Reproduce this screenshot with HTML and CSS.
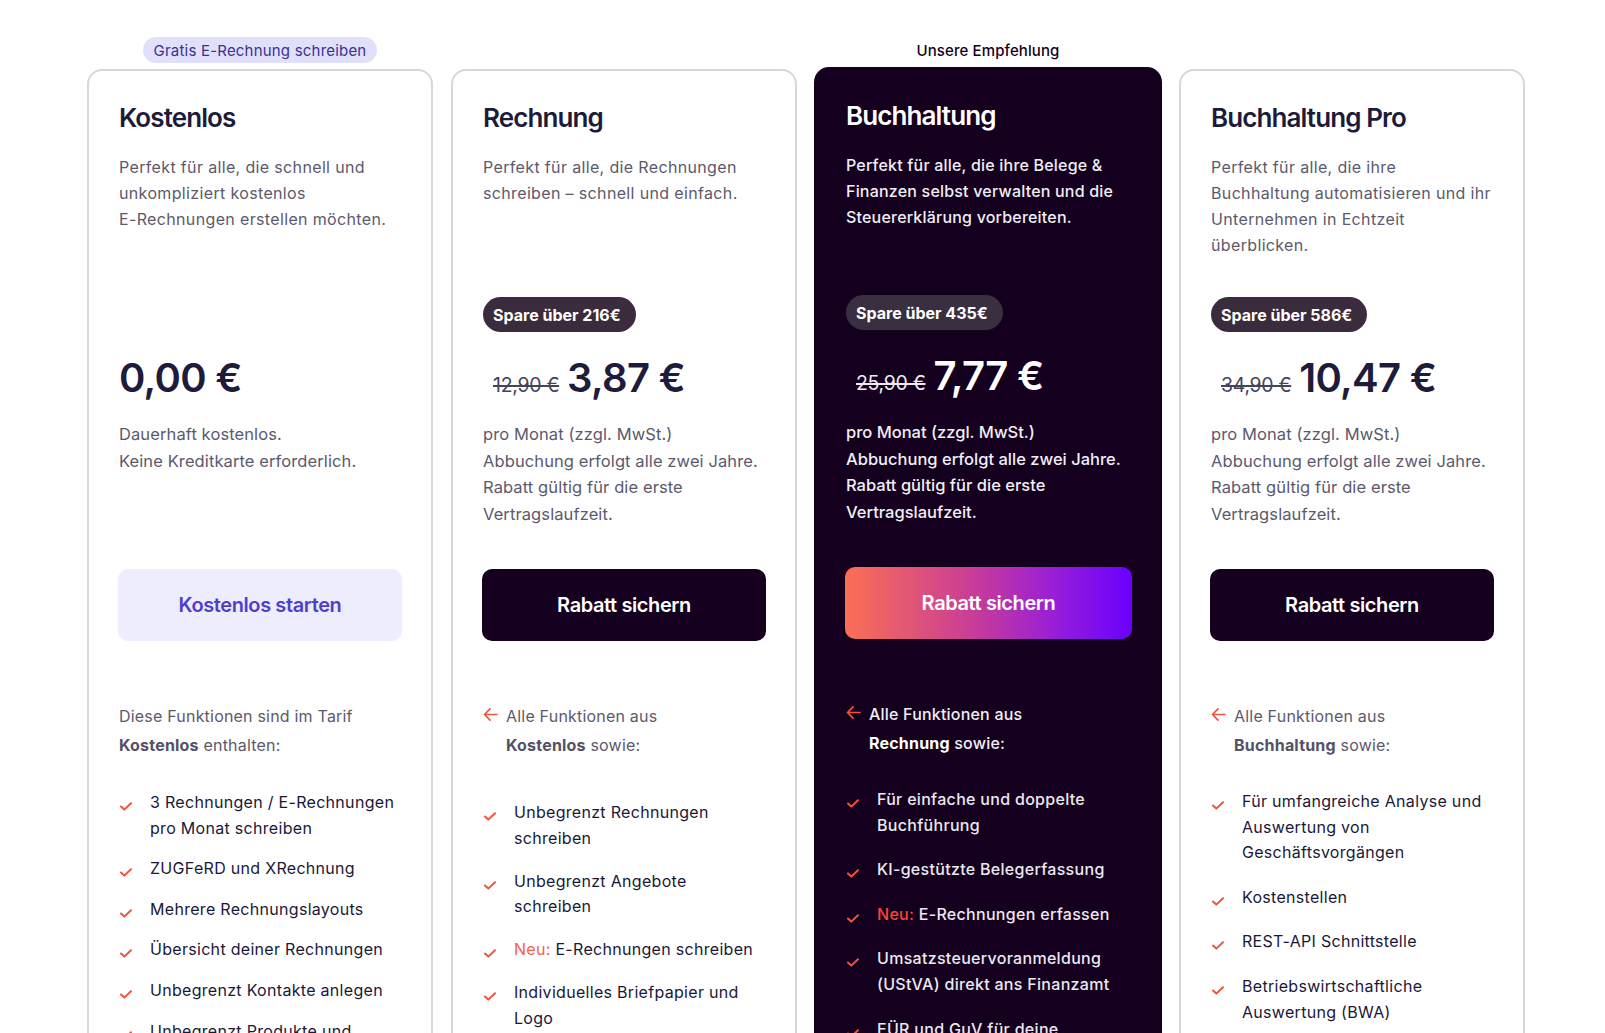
FILE: index.html
```html
<!DOCTYPE html>
<html lang="de">
<head>
<meta charset="utf-8">
<title>Tarife</title>
<link rel="stylesheet" href="styles.css">
</head>
<body>
<main class="plans">

  <section class="col">
    <div class="label-row"><span class="pill">Gratis E-Rechnung schreiben</span></div>
    <div class="card">
      <h2 class="title">Kostenlos</h2>
      <p class="desc">Perfekt für alle, die schnell und<br>unkompliziert kostenlos<br>E-Rechnungen erstellen möchten.</p>
      <div class="badge-slot"></div>
      <div class="price"><span class="now">0,00 €</span></div>
      <p class="note">Dauerhaft kostenlos.<br>Keine Kreditkarte erforderlich.</p>
      <a class="btn btn-light" href="#">Kostenlos starten</a>
      <div class="feat-head"><span class="feat-head-text">Diese Funktionen sind im Tarif<br><b>Kostenlos</b> enthalten:</span></div>
      <ul class="features gap-sm list-first">
        <li><svg class="check" viewBox="0 0 12 9"><path d="M1 4.5 L4.3 7.6 L11 1.2"/></svg><span>3 Rechnungen / E-Rechnungen pro Monat schreiben</span></li>
        <li><svg class="check" viewBox="0 0 12 9"><path d="M1 4.5 L4.3 7.6 L11 1.2"/></svg><span>ZUGFeRD und XRechnung</span></li>
        <li><svg class="check" viewBox="0 0 12 9"><path d="M1 4.5 L4.3 7.6 L11 1.2"/></svg><span>Mehrere Rechnungslayouts</span></li>
        <li><svg class="check" viewBox="0 0 12 9"><path d="M1 4.5 L4.3 7.6 L11 1.2"/></svg><span>Übersicht deiner Rechnungen</span></li>
        <li><svg class="check" viewBox="0 0 12 9"><path d="M1 4.5 L4.3 7.6 L11 1.2"/></svg><span>Unbegrenzt Kontakte anlegen</span></li>
        <li><svg class="check" viewBox="0 0 12 9"><path d="M1 4.5 L4.3 7.6 L11 1.2"/></svg><span>Unbegrenzt Produkte und Dienstleistungen anlegen</span></li>
      </ul>
    </div>
  </section>

  <section class="col">
    <div class="label-row"></div>
    <div class="card">
      <h2 class="title">Rechnung</h2>
      <p class="desc">Perfekt für alle, die Rechnungen<br>schreiben – schnell und einfach.</p>
      <div class="badge-slot"><span class="badge">Spare über 216€</span></div>
      <div class="price"><s class="old">12,90 €</s><span class="now">3,87 €</span></div>
      <p class="note">pro Monat (zzgl. MwSt.)<br>Abbuchung erfolgt alle zwei Jahre.<br>Rabatt gültig für die erste<br>Vertragslaufzeit.</p>
      <a class="btn btn-dark" href="#">Rabatt sichern</a>
      <div class="feat-head"><svg class="arrow" viewBox="0 0 16 14"><path d="M15 7 H1.5 M7.5 1 L1.5 7 L7.5 13"/></svg><span class="feat-head-text">Alle Funktionen aus<br><b>Kostenlos</b> sowie:</span></div>
      <ul class="features gap-md list-low">
        <li><svg class="check" viewBox="0 0 12 9"><path d="M1 4.5 L4.3 7.6 L11 1.2"/></svg><span>Unbegrenzt Rechnungen schreiben</span></li>
        <li><svg class="check" viewBox="0 0 12 9"><path d="M1 4.5 L4.3 7.6 L11 1.2"/></svg><span>Unbegrenzt Angebote schreiben</span></li>
        <li><svg class="check" viewBox="0 0 12 9"><path d="M1 4.5 L4.3 7.6 L11 1.2"/></svg><span><em class="new">Neu:</em> E-Rechnungen schreiben</span></li>
        <li><svg class="check" viewBox="0 0 12 9"><path d="M1 4.5 L4.3 7.6 L11 1.2"/></svg><span>Individuelles Briefpapier und Logo</span></li>
        <li><svg class="check" viewBox="0 0 12 9"><path d="M1 4.5 L4.3 7.6 L11 1.2"/></svg><span>Mahnungen und Zahlungserinnerungen</span></li>
      </ul>
    </div>
  </section>

  <section class="col">
    <div class="label-row"><span class="recommend">Unsere Empfehlung</span></div>
    <div class="card card-featured">
      <h2 class="title">Buchhaltung</h2>
      <p class="desc">Perfekt für alle, die ihre Belege &amp;<br>Finanzen selbst verwalten und die<br>Steuererklärung vorbereiten.</p>
      <div class="badge-slot"><span class="badge">Spare über 435€</span></div>
      <div class="price"><s class="old">25,90 €</s><span class="now">7,77 €</span></div>
      <p class="note">pro Monat (zzgl. MwSt.)<br>Abbuchung erfolgt alle zwei Jahre.<br>Rabatt gültig für die erste<br>Vertragslaufzeit.</p>
      <a class="btn btn-gradient" href="#">Rabatt sichern</a>
      <div class="feat-head"><svg class="arrow" viewBox="0 0 16 14"><path d="M15 7 H1.5 M7.5 1 L1.5 7 L7.5 13"/></svg><span class="feat-head-text">Alle Funktionen aus<br><b>Rechnung</b> sowie:</span></div>
      <ul class="features gap-lg">
        <li><svg class="check" viewBox="0 0 12 9"><path d="M1 4.5 L4.3 7.6 L11 1.2"/></svg><span>Für einfache und doppelte Buchführung</span></li>
        <li><svg class="check" viewBox="0 0 12 9"><path d="M1 4.5 L4.3 7.6 L11 1.2"/></svg><span>KI-gestützte Belegerfassung</span></li>
        <li><svg class="check" viewBox="0 0 12 9"><path d="M1 4.5 L4.3 7.6 L11 1.2"/></svg><span><em class="new">Neu:</em> E-Rechnungen erfassen</span></li>
        <li><svg class="check" viewBox="0 0 12 9"><path d="M1 4.5 L4.3 7.6 L11 1.2"/></svg><span>Umsatzsteuervoranmeldung (UStVA) direkt ans Finanzamt</span></li>
        <li><svg class="check" viewBox="0 0 12 9"><path d="M1 4.5 L4.3 7.6 L11 1.2"/></svg><span>EÜR und GuV für deine Steuererklärung</span></li>
      </ul>
    </div>
  </section>

  <section class="col">
    <div class="label-row"></div>
    <div class="card">
      <h2 class="title">Buchhaltung Pro</h2>
      <p class="desc">Perfekt für alle, die ihre<br>Buchhaltung automatisieren und ihr<br>Unternehmen in Echtzeit<br>überblicken.</p>
      <div class="badge-slot"><span class="badge">Spare über 586€</span></div>
      <div class="price"><s class="old">34,90 €</s><span class="now">10,47 €</span></div>
      <p class="note">pro Monat (zzgl. MwSt.)<br>Abbuchung erfolgt alle zwei Jahre.<br>Rabatt gültig für die erste<br>Vertragslaufzeit.</p>
      <a class="btn btn-dark" href="#">Rabatt sichern</a>
      <div class="feat-head"><svg class="arrow" viewBox="0 0 16 14"><path d="M15 7 H1.5 M7.5 1 L1.5 7 L7.5 13"/></svg><span class="feat-head-text">Alle Funktionen aus<br><b>Buchhaltung</b> sowie:</span></div>
      <ul class="features gap-lg">
        <li><svg class="check" viewBox="0 0 12 9"><path d="M1 4.5 L4.3 7.6 L11 1.2"/></svg><span>Für umfangreiche Analyse und Auswertung von Geschäftsvorgängen</span></li>
        <li><svg class="check" viewBox="0 0 12 9"><path d="M1 4.5 L4.3 7.6 L11 1.2"/></svg><span>Kostenstellen</span></li>
        <li><svg class="check" viewBox="0 0 12 9"><path d="M1 4.5 L4.3 7.6 L11 1.2"/></svg><span>REST-API Schnittstelle</span></li>
        <li><svg class="check" viewBox="0 0 12 9"><path d="M1 4.5 L4.3 7.6 L11 1.2"/></svg><span>Betriebswirtschaftliche Auswertung (BWA)</span></li>
        <li><svg class="check" viewBox="0 0 12 9"><path d="M1 4.5 L4.3 7.6 L11 1.2"/></svg><span>Anlagenverzeichnis</span></li>
      </ul>
    </div>
  </section>

</main>
</body>
</html>
```

FILE: styles.css
```css
* { box-sizing: border-box; }

html, body {
  margin: 0;
  padding: 0;
  background: #ffffff;
}

body {
  font-family: Inter, "Noto Sans", "Liberation Sans", sans-serif;
  color: #1d1b3a;
  -webkit-font-smoothing: antialiased;
}

.plans {
  display: grid;
  grid-template-columns: repeat(4, 346px);
  column-gap: 18px;
  padding: 37px 0 0 87px;
  align-items: start;
}

.col {
  display: flex;
  flex-direction: column;
}

.label-row {
  height: 26px;
  margin-bottom: 6px;
  display: flex;
  justify-content: center;
  align-items: center;
}

.pill {
  display: inline-flex;
  align-items: center;
  height: 26px;
  padding: 0 11px;
  border-radius: 13px;
  background: #e1e0fb;
  color: #3a2f93;
  font-size: 15px;
  letter-spacing: 0.2px;
}

.recommend {
  font-size: 15px;
  font-weight: 500;
  color: #14001e;
  letter-spacing: 0.1px;
}

.card {
  border: 2px solid #d8d8d8;
  border-radius: 15px;
  padding: 30px 30px 40px;
  background: #ffffff;
  display: flex;
  flex-direction: column;
  min-height: 1100px;
}

.card-featured {
  border: none;
  margin: -2px -1px 0 -1px;
  padding: 32px 32px 40px;
  background: #14001e;
  color: #ffffff;
}

.title {
  margin: 0;
  font-size: 26px;
  line-height: 34px;
  font-weight: 600;
  letter-spacing: -0.9px;
  color: #1d1b3a;
}
.card-featured .title { color: #ffffff; }

.desc {
  margin: 19px 0 0;
  min-height: 125px;
  font-size: 16px;
  line-height: 26px;
  color: #5c596d;
  letter-spacing: 0.35px;
}
.card-featured .desc {
  color: #f1eef5;
  font-weight: 500;
  letter-spacing: 0.2px;
}

.badge-slot {
  height: 35px;
  margin-top: 18px;
  display: flex;
  align-items: center;
}

.badge {
  display: inline-flex;
  align-items: center;
  height: 35px;
  padding: 0 15px 0 10px;
  border-radius: 18px;
  background: #3a2c3c;
  color: #ffffff;
  font-size: 16px;
  font-weight: 700;
  letter-spacing: 0;
}
.card-featured .badge { background: #3a2f40; }

.price {
  margin-top: 22px;
  height: 48px;
  line-height: 48px;
  white-space: nowrap;
}

.old {
  margin-left: 10px;
  margin-right: 8px;
  font-size: 19.5px;
  color: #45435a;
  letter-spacing: -0.3px;
  text-decoration-thickness: 1.5px;
}
.card-featured .old { color: #efeaf2; }

.now {
  font-size: 40px;
  font-weight: 600;
  letter-spacing: -0.7px;
  color: #1e1b3b;
}
.card-featured .now { color: #ffffff; }

.note {
  margin: 19px 0 0;
  min-height: 106px;
  font-size: 16.5px;
  line-height: 26.5px;
  color: #5c596d;
  letter-spacing: 0.1px;
}
.card-featured .note {
  color: #f1eef5;
  font-weight: 500;
  letter-spacing: 0;
}

.btn {
  margin: 42px -1px 0;
  height: 72px;
  border-radius: 10px;
  display: flex;
  align-items: center;
  justify-content: center;
  text-decoration: none;
  font-size: 20px;
  font-weight: 600;
  letter-spacing: -0.4px;
}

.btn-light {
  background: #ededfd;
  color: #4f3fcc;
}

.btn-dark {
  background: #15001f;
  color: #ffffff;
}

.btn-gradient {
  margin: 42px -2px 0 -1px;
  background: linear-gradient(90deg, #fb6f55 0%, #c83c98 45%, #9a1fd6 72%, #6a00ff 100%);
  color: #ffffff;
}

.feat-head {
  margin-top: 61px;
  display: flex;
  align-items: flex-start;
  font-size: 16px;
  line-height: 29px;
  color: #5c596d;
  letter-spacing: 0.2px;
}
.feat-head b {
  font-weight: 700;
  color: #545166;
}
.card-featured .feat-head { color: #f1eef5; font-weight: 500; }
.card-featured .feat-head b { color: #ffffff; }

.arrow {
  flex: none;
  width: 15px;
  height: 13px;
  margin: 6px 8px 0 0;
  fill: none;
  stroke: #f2533f;
  stroke-width: 1.8;
  stroke-linecap: round;
  stroke-linejoin: round;
}

.features {
  list-style: none;
  margin: 29px 0 0;
  padding: 0;
  display: flex;
  flex-direction: column;
}
.gap-sm { gap: 15px; }
.gap-md { gap: 17.5px; }
.gap-lg { gap: 19px; }
.list-first { margin-top: 30px; }
.list-low { margin-top: 40px; }

.features li {
  display: flex;
  align-items: flex-start;
  font-size: 16px;
  line-height: 25.6px;
  color: #1a1838;
  letter-spacing: 0.3px;
  padding-right: 4px;
}
.card-featured .features li {
  color: #ece8f1;
  font-weight: 500;
}

.check {
  flex: none;
  width: 12px;
  height: 9px;
  margin: 12px 18px 0 1px;
  fill: none;
  stroke: #f2533f;
  stroke-width: 2;
  stroke-linecap: round;
  stroke-linejoin: round;
}

.new {
  font-style: normal;
  color: #f4604e;
}
.card-featured .new { color: #ff4136; }
```
